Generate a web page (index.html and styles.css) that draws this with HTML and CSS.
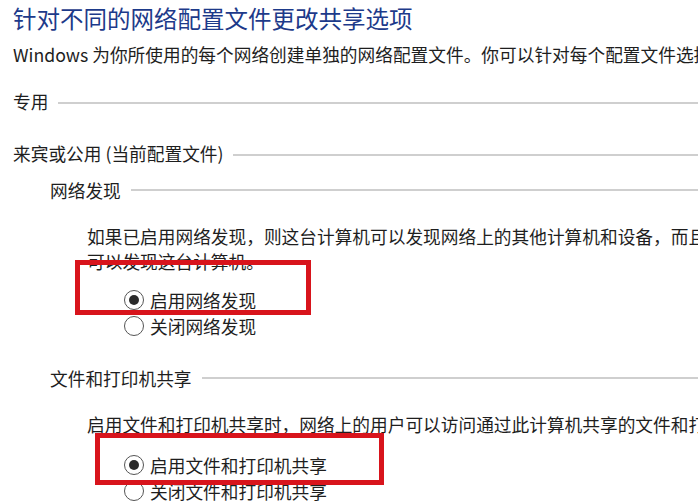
FILE: index.html
```html
<!DOCTYPE html>
<html lang="zh-CN">
<head>
    <meta charset="UTF-8">
    <title>高级共享设置</title>
    <link rel="stylesheet" href="styles.css">
</head>
<body>
    <div class="page">
        <h2 class="title">针对不同的网络配置文件更改共享选项</h2>
        <p class="desc">Windows 为你所使用的每个网络创建单独的网络配置文件。你可以针对每个配置文件选择特定的选项。</p>

        <div class="group group-private">
            <span>专用</span><i class="rule"></i>
        </div>

        <div class="group group-public">
            <span>来宾或公用 (当前配置文件)</span><i class="rule"></i>
        </div>

        <div class="sub sub-discovery">
            <span>网络发现</span><i class="rule"></i>
        </div>
        <p class="note note-discovery">如果已启用网络发现，则这台计算机可以发现网络上的其他计算机和设备，而且其他网络计算机也<br>可以发现这台计算机。</p>
        <div class="options options-discovery">
            <label class="radio"><span class="dot checked"></span>启用网络发现</label>
            <label class="radio"><span class="dot"></span>关闭网络发现</label>
        </div>

        <div class="sub sub-sharing">
            <span>文件和打印机共享</span><i class="rule"></i>
        </div>
        <p class="note note-sharing">启用文件和打印机共享时，网络上的用户可以访问通过此计算机共享的文件和打印机。</p>
        <div class="options options-sharing">
            <label class="radio"><span class="dot checked"></span>启用文件和打印机共享</label>
            <label class="radio"><span class="dot"></span>关闭文件和打印机共享</label>
        </div>

        <div class="mark mark-one"></div>
        <div class="mark mark-two"></div>
    </div>
</body>
</html>
```

FILE: styles.css
```css
html, body {
    margin: 0;
    padding: 0;
    background-color: #ffffff;
    overflow: hidden;
}
.page {
    position: relative;
    width: 698px;
    height: 502px;
    overflow: hidden;
    font-family: "Noto Sans CJK SC", "Noto Sans", sans-serif;
    font-size: 17.7px;
    color: #1e1e1e;
}
.title {
    margin: 0;
    height: 36px;
    line-height: 36px;
    padding-left: 13px;
    font-size: 23.5px;
    font-weight: normal;
    color: #1d3a8a;
    white-space: nowrap;
}
.desc {
    margin: 0;
    height: 36px;
    line-height: 36px;
    padding-left: 13px;
    white-space: nowrap;
}
.group, .sub {
    display: flex;
    align-items: center;
    height: 30px;
    line-height: 30px;
    white-space: nowrap;
}
.group {
    padding-left: 13px;
}
.sub {
    padding-left: 50px;
}
.rule {
    flex: 1;
    height: 2px;
    margin-left: 10px;
    margin-top: 3px;
    background-color: #cfcfcf;
}
.sub .rule {
    margin-top: 0;
}
.group-private {
    margin-top: 14px;
}
.group-public {
    margin-top: 22px;
}
.sub-discovery {
    margin-top: 7px;
}
.sub-sharing {
    margin-top: 24px;
}
.note {
    margin: 0;
    padding-left: 87px;
    line-height: 25px;
    white-space: nowrap;
}
.note-discovery {
    margin-top: 19px;
}
.note-sharing {
    margin-top: 19px;
}
.options {
    padding-left: 124px;
}
.options-discovery {
    margin-top: 13px;
}
.options-sharing {
    margin-top: 15px;
}
.radio {
    display: flex;
    align-items: center;
    height: 26px;
    white-space: nowrap;
}
.dot {
    box-sizing: border-box;
    width: 20px;
    height: 20px;
    margin-right: 6px;
    border: 1.5px solid #555555;
    border-radius: 50%;
    background-color: #ffffff;
    display: flex;
    align-items: center;
    justify-content: center;
}
.dot.checked::after {
    content: "";
    width: 10px;
    height: 10px;
    border-radius: 50%;
    background-color: #2a2a2a;
}
.mark {
    position: absolute;
    box-sizing: border-box;
    border: 5px solid #d8141c;
}
.mark-one {
    left: 75px;
    top: 260px;
    width: 236px;
    height: 55px;
}
.mark-two {
    left: 95px;
    top: 433px;
    width: 289px;
    height: 52px;
}
```
